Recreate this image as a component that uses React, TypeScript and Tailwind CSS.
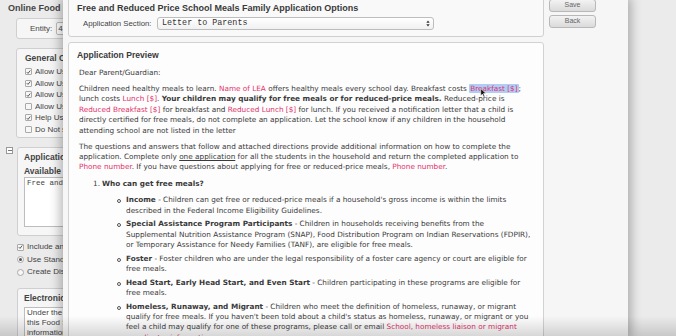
import React from 'react';

const R = ({ children }: { children: React.ReactNode }) => (
  <span className="text-[#e2336b]">{children}</span>
);

const Check = ({ on }: { on?: boolean }) => (
  <span className="flex h-[7px] w-[7px] shrink-0 items-center justify-center rounded-[1px] border border-[#a9a9a9] bg-[#f7f7f7]">
    {on && (
      <svg viewBox="0 0 8 8" className="h-[6px] w-[6px]">
        <path d="M1.2 4.2 L3.2 6.2 L6.8 1.6" fill="none" stroke="#333" strokeWidth="1.3" />
      </svg>
    )}
  </span>
);

const Radio = ({ on }: { on?: boolean }) => (
  <span className="flex h-[7px] w-[7px] shrink-0 items-center justify-center rounded-full border border-[#a9a9a9] bg-[#f7f7f7]">
    {on && <span className="h-[3px] w-[3px] rounded-full bg-[#555]" />}
  </span>
);

// the page behind the dialog: only its left strip shows, the rest is covered
const BackgroundPage = () => (
  <div className="h-full w-[64px] overflow-hidden">
    <div className="flex w-[420px] flex-col font-['Liberation_Sans',Arial,sans-serif] text-[#444]">
      <div className="pl-[8px] pt-[2px] text-[9px] font-bold leading-[12px]">Online Food Service Options</div>

      <div className="ml-[16px] mt-[4px] flex h-[21px] items-center rounded-[3px] border border-[#cfcfcf] bg-[#f6f6f6] pl-[13px] text-[8px]">
        <span>Entity:</span>
        <span className="ml-[4px] flex h-[13px] w-[120px] items-center rounded-[2px] border border-[#bdbdbd] bg-white pl-[1px]">4 - Sample District</span>
      </div>

      <div className="ml-[16px] mt-[9px] flex h-[90px] flex-col rounded-[3px] border border-[#cfcfcf] bg-[#f6f6f6] pl-[8px] pt-[4px] text-[8px]">
        <div className="text-[8.5px] font-bold leading-[11px]">General Options</div>
        <div className="mt-[2px] flex flex-col leading-[11.5px]">
          {[
            ['Allow Users to apply online', true],
            ['Allow Users to print application', true],
            ['Allow Users to save application', true],
            ['Allow Users to upload documents', false],
            ['Help Users complete the form', true],
            ['Do Not show income table', false],
          ].map(([t, on]) => (
            <div key={t as string} className="flex items-center gap-[3px]">
              <Check on={on as boolean} />
              <span>{t as string}</span>
            </div>
          ))}
        </div>
      </div>

      <div className="mt-[9px] flex">
        <span className="ml-[6px] flex h-[7px] w-[7px] items-center justify-center border border-[#999] bg-white">
          <span className="h-px w-[4px] bg-[#777]" />
        </span>
        <div className="ml-[4px] flex h-[89px] w-[380px] flex-col rounded-[3px] border border-[#cfcfcf] bg-[#f6f6f6] pl-[6px] pt-[4px]">
          <div className="text-[8.5px] font-bold leading-[11px]">Application Form Sections</div>
          <div className="mt-[3px] text-[8.5px] font-bold leading-[10px]">Available Sections</div>
          <div className="mt-[1px] h-[50px] w-[300px] border border-[#bdbdbd] bg-white pl-[2px] font-['Liberation_Mono',monospace] text-[7.5px] leading-[10px]">
            Free and Reduced Price
          </div>
        </div>
      </div>

      <div className="ml-[17px] mt-[6px] flex flex-col gap-[2px] text-[8px] leading-[10.5px]">
        <div className="flex items-center gap-[3px]">
          <Check on />
          <span>Include an electronic signature</span>
        </div>
        <div className="flex items-center gap-[3px]">
          <Radio on />
          <span>Use Standard Letter</span>
        </div>
        <div className="flex items-center gap-[3px]">
          <Radio />
          <span>Create District Letter</span>
        </div>
      </div>

      <div className="ml-[17px] mt-[10px] flex h-[60px] w-[380px] flex-col rounded-[3px] border border-[#cfcfcf] bg-[#f6f6f6] pl-[6px] pt-[4px]">
        <div className="text-[8.5px] font-bold leading-[11px]">Electronic Signature Statement</div>
        <div className="mt-[3px] w-[300px] border border-[#bdbdbd] bg-white pl-[2px] text-[8px] leading-[10px]">
          <div>Under the penalty of perjury I certify</div>
          <div>this Food Service application and all</div>
          <div>information is true and correct</div>
        </div>
      </div>
    </div>
  </div>
);

const Bullet = ({ children }: { children: React.ReactNode }) => (
  <div className="flex">
    <span className="mr-[5px] mt-[4px] h-[4px] w-[4px] shrink-0 rounded-full border border-[#555]" />
    <div>{children}</div>
  </div>
);

const Preview = () => (
  <div className="relative mt-[5px] flex-1 rounded-[3px] border border-[#d2d2d2] bg-[#fdfdfd] pl-[8px] pt-[7px]">
    <div className="font-['Liberation_Sans',Arial,sans-serif] text-[8.6px] font-bold leading-[11px] text-[#3a3a3a]">
      Application Preview
    </div>
    <div className="mt-[7px] pl-[2px] font-['DejaVu_Sans',Verdana,sans-serif] text-[7.3px] leading-[10.4px] text-[#3a3a3a] [&>div]:whitespace-nowrap">
      <div>Dear Parent/Guardian:</div>
      <div className="mt-[5.6px]">
        Children need healthy meals to learn. <R>Name of LEA</R> offers healthy meals every school day. Breakfast costs{' '}
        <span className="rounded-[1px] bg-[#aecdf7] px-px text-[#e2336b]">Breakfast [$]</span>;
      </div>
      <div>
        lunch costs <R>Lunch [$]</R>. <b>Your children may qualify for free meals or for reduced-price meals.</b> Reduced-price is
      </div>
      <div>
        <R>Reduced Breakfast [$]</R> for breakfast and <R>Reduced Lunch [$]</R> for lunch. If you received a notification letter that a child is
      </div>
      <div>directly certified for free meals, do not complete an application. Let the school know if any children in the household</div>
      <div>attending school are not listed in the letter</div>
      <div className="mt-[5.6px]">
        The questions and answers that follow and attached directions provide additional information on how to complete the
      </div>
      <div>
        application. Complete only <u>one application</u> for all the students in the household and return the completed application to
      </div>
      <div>
        <R>Phone number</R>. If you have questions about applying for free or reduced-price meals, <R>Phone number</R>.
      </div>
      <div className="mt-[6.5px] flex pl-[14px]">
        <span className="w-[9px]">1.</span>
        <b>Who can get free meals?</b>
      </div>
      <div className="mt-[5.5px] flex flex-col gap-[3.2px] pl-[38px] [&_div]:whitespace-nowrap">
        <Bullet>
          <div><b>Income</b> - Children can get free or reduced-price meals if a household's gross income is within the limits</div>
          <div>described in the Federal Income Eligibility Guidelines.</div>
        </Bullet>
        <Bullet>
          <div><b>Special Assistance Program Participants</b> - Children in households receiving benefits from the</div>
          <div>Supplemental Nutrition Assistance Program (SNAP), Food Distribution Program on Indian Reservations (FDPIR),</div>
          <div>or Temporary Assistance for Needy Families (TANF), are eligible for free meals.</div>
        </Bullet>
        <Bullet>
          <div><b>Foster</b> - Foster children who are under the legal responsibility of a foster care agency or court are eligible for</div>
          <div>free meals.</div>
        </Bullet>
        <Bullet>
          <div><b>Head Start, Early Head Start, and Even Start</b> - Children participating in these programs are eligible for</div>
          <div>free meals.</div>
        </Bullet>
        <Bullet>
          <div><b>Homeless, Runaway, and Migrant</b> - Children who meet the definition of homeless, runaway, or migrant</div>
          <div>qualify for free meals. If you haven't been told about a child's status as homeless, runaway, or migrant or you</div>
          <div>feel a child may qualify for one of these programs, please call or email <R>School, homeless liaison or migrant</R></div>
          <div><R>coordinator information</R>.</div>
        </Bullet>
      </div>
    </div>
    {/* mouse pointer over the highlighted field */}
    <svg viewBox="0 0 12 18" className="absolute left-[411px] top-[45px] h-[10px] w-[7px]">
      <path d="M1 1 L1 14 L4 11 L6.5 16.5 L8.5 15.5 L6 10 L10.5 10 Z" fill="#111" stroke="#fff" strokeWidth="1" />
    </svg>
  </div>
);

const Modal = () => (
  <div className="absolute bottom-0 left-[63px] top-0 flex w-[565px] overflow-hidden bg-[#f6f6f6] pl-[5px] shadow-[0_0_10px_3px_rgba(0,0,0,0.28)]">
    <div className="flex w-[476px] flex-col">
      <div className="-mt-[4px] h-[41px] shrink-0 rounded-[3px] border border-[#d0d0d0] bg-[#f9f9f9] pl-[8px] pt-[6px] font-['Liberation_Sans',Arial,sans-serif] text-[#3a3a3a]">
        <div className="text-[9px] font-bold leading-[11px]">Free and Reduced Price School Meals Family Application Options</div>
        <div className="mt-[3px] flex items-center pl-[6px]">
          <span className="w-[74px] text-[7.8px] text-[#444]">Application Section:</span>
          <div className="flex h-[13px] w-[277px] items-center justify-between rounded-[3px] border border-[#bdbdbd] bg-gradient-to-b from-white to-[#f1f1f1] pl-[4px] pr-[3px]">
            <span className="font-['Liberation_Mono',monospace] text-[8.4px] text-[#333]">Letter to Parents</span>
            <svg viewBox="0 0 6 10" className="h-[7px] w-[4px]">
              <path d="M3 0.5 L5.5 4 L0.5 4 Z M3 9.5 L5.5 6 L0.5 6 Z" fill="#333" />
            </svg>
          </div>
        </div>
      </div>
      <Preview />
    </div>
    <div className="ml-[5px] flex w-[47px] shrink-0 flex-col gap-[3px] font-['Liberation_Sans',Arial,sans-serif]">
      <button className="-mt-[1px] flex h-[13px] items-center justify-center rounded-[3px] border border-[#b8b8b8] bg-gradient-to-b from-[#f3f3f3] to-[#dadada] text-[7px] text-[#666]">
        Save
      </button>
      <button className="flex h-[13px] items-center justify-center rounded-[3px] border border-[#b8b8b8] bg-gradient-to-b from-[#f3f3f3] to-[#dadada] text-[7px] text-[#666]">
        Back
      </button>
    </div>
  </div>
);

export default function App() {
  return (
    <div className="relative h-[336px] w-[676px] overflow-hidden bg-[#ebebeb]">
      <BackgroundPage />
      <Modal />
      <div className="pointer-events-none absolute inset-x-0 bottom-0 h-[20px] bg-gradient-to-b from-transparent to-black/15" />
    </div>
  );
}
